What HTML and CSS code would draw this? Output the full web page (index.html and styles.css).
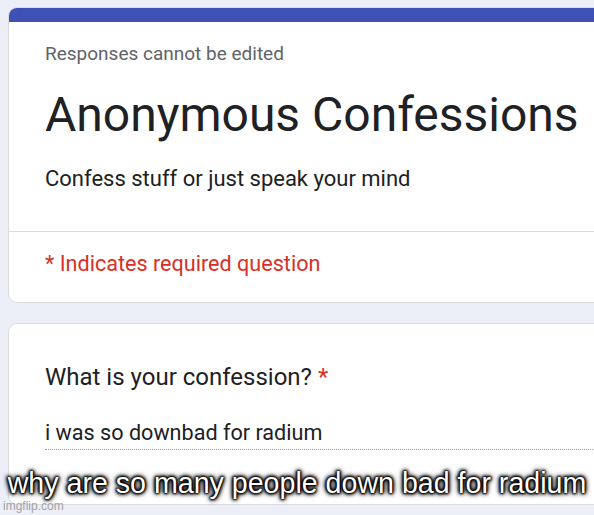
FILE: index.html
```html
<!DOCTYPE html>
<html>
<head>
<meta charset="utf-8">
<link rel="stylesheet" href="styles.css">
</head>
<body>
<div class="page">
  <div class="card card-head">
    <div class="bar"></div>
    <div class="head-body">
      <div class="note">Responses cannot be edited</div>
      <h1 class="title">Anonymous Confessions</h1>
      <div class="desc">Confess stuff or just speak your mind</div>
    </div>
    <div class="req">* Indicates required question</div>
  </div>
  <div class="card card-q">
    <div class="question">What is your confession? <span class="star">*</span></div>
    <div class="answer">i was so downbad for radium</div>
  </div>
</div>
<div class="caption">why are so many people down bad for radium</div>
<div class="watermark">imgflip.com</div>
</body>
</html>
```
FILE: styles.css
```css
html, body {
  margin: 0;
  padding: 0;
}
body {
  width: 594px;
  height: 515px;
  overflow: hidden;
  background: #eceef8;
  font-family: Roboto, "Liberation Sans", sans-serif;
  position: relative;
}
.page {
  padding: 7px 0 0 8px;
  display: flex;
  flex-direction: column;
  gap: 20px;
}
.card {
  width: 640px;
  background: #fff;
  border: 1px solid #dadce0;
  border-radius: 9px;
  overflow: hidden;
  box-sizing: border-box;
}
.bar {
  height: 15px;
  background: #3f51b5;
  margin: -1px -1px 0 -1px;
}
.head-body {
  padding: 20px 36px 0 36px;
  border-bottom: 1px solid #dadce0;
  height: 210px;
  box-sizing: border-box;
}
.note {
  font-size: 19px;
  line-height: 24px;
  color: #5f6368;
}
.title {
  margin: 21px 0 0 0;
  font-weight: 400;
  font-size: 48px;
  line-height: 56px;
  color: #202124;
  white-space: nowrap;
}
.desc {
  margin-top: 22px;
  font-size: 22px;
  line-height: 28px;
  color: #202124;
}
.req {
  padding: 18px 36px 0 36px;
  height: 70px;
  box-sizing: border-box;
  font-size: 21.6px;
  line-height: 28px;
  color: #d93025;
}
.card-q {
  height: 182px;
  padding: 38px 36px 0 36px;
}
.question {
  font-size: 24px;
  line-height: 30px;
  color: #202124;
}
.star {
  color: #d93025;
}
.answer {
  margin-top: 27px;
  font-size: 21.6px;
  line-height: 28px;
  color: #202124;
  border-bottom: 1px dotted #9aa0a6;
  padding-bottom: 2px;
}
.caption {
  position: absolute;
  left: 0;
  width: 594px;
  top: 467px;
  text-align: center;
  font-family: "Liberation Sans", Arial, sans-serif;
  font-size: 28.6px;
  line-height: 32px;
  color: #fff;
  text-shadow: 0 0 2px #000, 0 0 2px #000, 0 0 3px #000, 0 0 3px #000, 0 0 4px #000, 0 0 5px #000, 0 0 6px #000;
  white-space: nowrap;
}
.watermark {
  position: absolute;
  left: 3px;
  top: 499px;
  font-family: "Liberation Sans", Arial, sans-serif;
  font-size: 12px;
  line-height: 14px;
  color: #a3a3a3;
}
```
